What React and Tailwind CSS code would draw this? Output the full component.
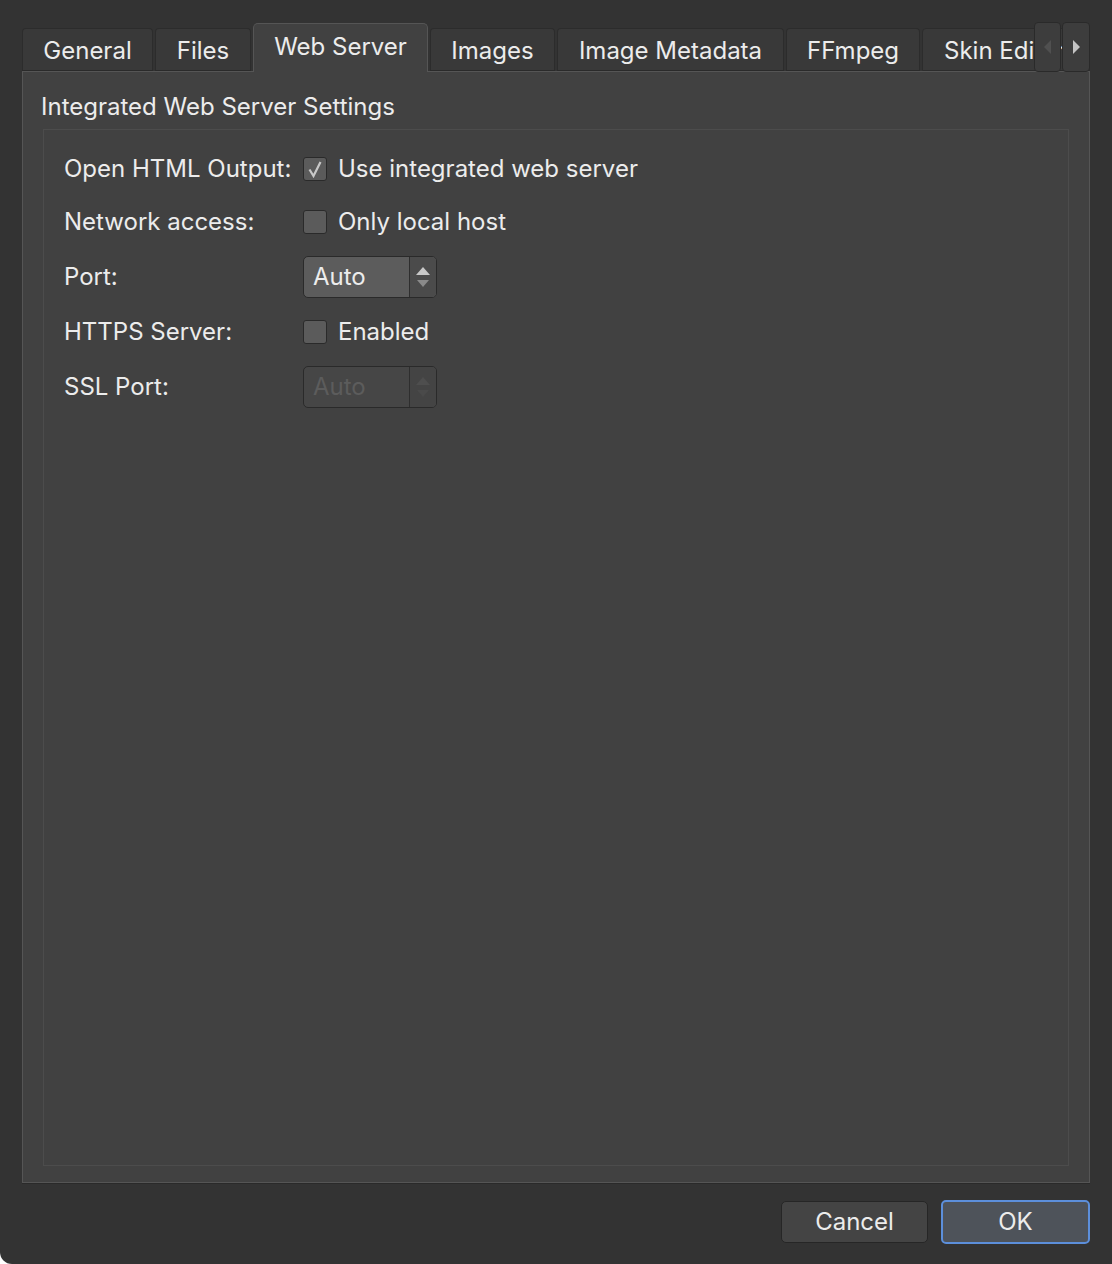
const tabs = [
  { label: "General", w: "w-[131px]" },
  { label: "Files", w: "w-[96px]" },
  { label: "Web Server", w: "w-[175px]", active: true },
  { label: "Images", w: "w-[125px]" },
  { label: "Image Metadata", w: "w-[227px]" },
  { label: "FFmpeg", w: "w-[134px]" },
];

function Checkbox({ checked }) {
  return (
    <div className="w-[24px] h-[24px] rounded-[3px] border border-[#2a2a2a] bg-[#5b5b5b] flex items-center justify-center">
      {checked && (
        <svg width="16" height="18" viewBox="0 0 16 18">
          <path d="M2.5 9.5 L6.5 16 L13.5 2" fill="none" stroke="#c8c8c8" strokeWidth="2.2" />
        </svg>
      )}
    </div>
  );
}

function SpinBox({ disabled }) {
  return (
    <div
      className={
        "w-[134px] h-[42px] rounded-[5px] border border-[#2a2a2a] flex overflow-hidden " +
        (disabled ? "bg-[#464646]" : "bg-[#5c5c5c]")
      }
    >
      <div className={"flex-1 flex items-center pl-[9px] " + (disabled ? "text-[#5c5c5c]" : "text-[#ececec]")}>
        Auto
      </div>
      <div className={"w-[27px] border-l border-[#2e2e2e] flex flex-col items-center justify-center gap-[5px] " + (disabled ? "bg-[#444444]" : "bg-[#4b4b4b]")}>
        <svg width="14" height="8" viewBox="0 0 14 8">
          <path d="M0 8 L7 0 L14 8 Z" fill={disabled ? "#4e4e4e" : "#c8c8c8"} />
        </svg>
        <svg width="12" height="7" viewBox="0 0 12 7">
          <path d="M0 0 L12 0 L6 7 Z" fill={disabled ? "#4a4a4a" : "#8a8a8a"} />
        </svg>
      </div>
    </div>
  );
}

function Row({ label, children }) {
  return (
    <div className="flex items-center">
      <div className="w-[239px] shrink-0">{label}</div>
      {children}
    </div>
  );
}

export default function App() {
  return (
    <div
      className="w-[1112px] h-[1264px] bg-[#333333] rounded-bl-[12px] overflow-hidden text-[#ececec] text-[24px] leading-none"
      style={{ fontFamily: "Inter, 'Noto Sans', sans-serif" }}
    >
      <div className="pl-[22px] pr-[22px] pt-[22px]">
        {/* Tab bar */}
        <div className="relative flex items-end h-[49px] gap-[2px] z-10">
          {tabs.map((t) =>
            t.active ? (
              <div
                key={t.label}
                className={t.w + " h-[49px] -mb-[1px] bg-[#414141] border border-b-0 border-[#555555] rounded-t-[5px] flex items-center justify-center pb-[3px]"}
              >
                {t.label}
              </div>
            ) : (
              <div
                key={t.label}
                className={t.w + " h-[43px] bg-[#393939] border border-[#2c2c2c] border-b-[#2a2a2a] rounded-t-[4px] flex items-center justify-center pt-[2px]"}
              >
                {t.label}
              </div>
            )
          )}
          <div className="flex-1 h-[43px] bg-[#393939] border border-[#2c2c2c] rounded-tl-[4px] overflow-hidden flex items-center pl-[21px] pt-[2px] whitespace-nowrap">
            Skin Editor
          </div>
          <div className="absolute right-0 top-0 flex gap-[1px]">
            <div className="w-[27px] h-[50px] rounded-[4px] border border-[#2a2a2a] bg-[#3d3d3d] flex items-center justify-center">
              <svg width="7" height="14" viewBox="0 0 7 14">
                <path d="M7 0 L0 7 L7 14 Z" fill="#505050" />
              </svg>
            </div>
            <div className="w-[28px] h-[50px] rounded-[4px] border border-[#2a2a2a] bg-[#3d3d3d] flex items-center justify-center">
              <svg width="7" height="14" viewBox="0 0 7 14">
                <path d="M0 0 L7 7 L0 14 Z" fill="#c4c4c4" />
              </svg>
            </div>
          </div>
        </div>

        {/* Pane */}
        <div className="h-[1112px] bg-[#414141] border border-[#555555] shadow-[0_1px_0_#2a2a2a] px-[20px] pt-[24px] pb-[16px] flex flex-col">
          <div className="h-[21px] flex items-center -ml-[2px]">Integrated Web Server Settings</div>
          <div className="mt-[12px] flex-1 border border-[#4c4c4c] pl-[20px] pt-[26px] flex flex-col">
            <div className="h-[26px] flex items-center">
              <Row label="Open HTML Output:">
                <Checkbox checked />
                <span className="ml-[11px]">Use integrated web server</span>
              </Row>
            </div>
            <div className="mt-[27px] h-[26px] flex items-center">
              <Row label="Network access:">
                <Checkbox />
                <span className="ml-[11px]">Only local host</span>
              </Row>
            </div>
            <div className="mt-[21px] h-[42px] flex items-center">
              <Row label="Port:">
                <SpinBox />
              </Row>
            </div>
            <div className="mt-[21px] h-[26px] flex items-center">
              <Row label="HTTPS Server:">
                <Checkbox />
                <span className="ml-[11px]">Enabled</span>
              </Row>
            </div>
            <div className="mt-[21px] h-[42px] flex items-center">
              <Row label="SSL Port:">
                <SpinBox disabled />
              </Row>
            </div>
          </div>
        </div>

        {/* Buttons */}
        <div className="mt-[17px] flex justify-end gap-[13px]">
          <div className="w-[147px] h-[42px] mt-[1px] rounded-[5px] border border-[#262626] bg-[#444444] flex items-center justify-center">
            Cancel
          </div>
          <div className="w-[149px] h-[44px] rounded-[5px] border-2 border-[#5c8fdb] bg-[#4e535a] flex items-center justify-center">
            OK
          </div>
        </div>
      </div>
    </div>
  );
}
